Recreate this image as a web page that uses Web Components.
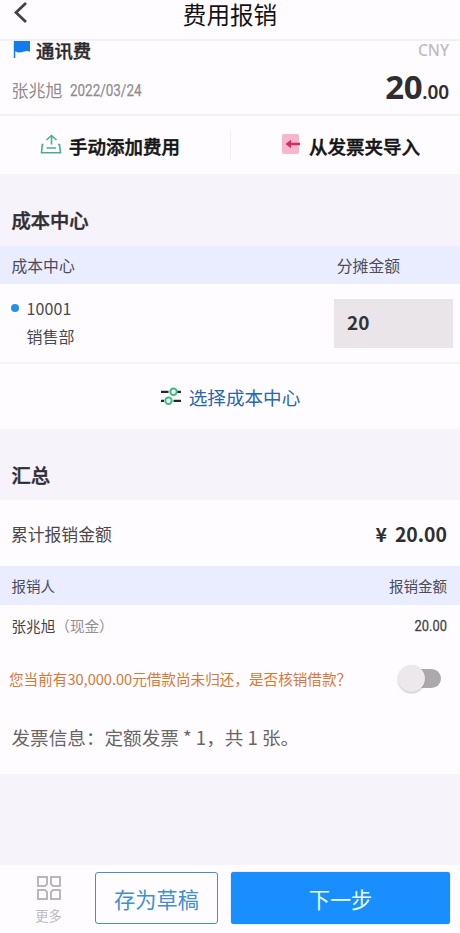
<!DOCTYPE html>
<html lang="zh-CN">
<head>
<meta charset="utf-8">
<meta name="viewport" content="width=device-width, initial-scale=1">
<title>费用报销</title>
<style>
html,body{margin:0;padding:0;background:#f7f3fa}
body{font-family:"Noto Sans CJK SC",sans-serif;color:#39363a;overflow:hidden}
</style>
</head>
<body>
<expense-page></expense-page>
<script>
const define = (name, css, html) => customElements.define(name, class extends HTMLElement {
  constructor() {
    super();
    const t = document.createElement('template');
    t.innerHTML = `<style>*{box-sizing:border-box}:host{box-sizing:border-box;white-space:nowrap}${css}</style>${html}`;
    this.attachShadow({mode: 'open'}).append(t.content.cloneNode(true));
  }
});

define('nav-bar', `
:host{display:grid;grid-template-columns:60px 1fr 60px;height:41px;background:#fefcff;border-bottom:2px solid #f2f0f4;align-items:start;font-family:"Liberation Sans","Noto Sans CJK SC",sans-serif}
svg{display:block;margin:1px 0 0 13px}
h1{margin:0;padding-top:3px;font-size:23.6px;font-weight:400;line-height:27px;color:#141315;text-align:center}`,
`<svg width="16" height="24" viewBox="0 0 16 24" fill="none" stroke="#454247" stroke-width="2.8"><path d="M13 2 3 11.5 13 21"/></svg><h1><slot></slot></h1>`);

define('expense-item', `
:host{display:flex;justify-content:space-between;height:75px;padding:0 11px 0 12px;background:#fefcff;border-bottom:2px solid #f4f1f6}
.l,.r{display:flex;flex-direction:column}
.r{align-items:flex-end}
.name{display:flex;gap:6px;height:19px;font-size:18.4px;line-height:18px;font-weight:500;-webkit-text-stroke:.35px #2b292c;color:#2b292c}
.meta{display:flex;gap:7px;margin:20px 0 0 -.5px;font-size:17px;line-height:20px;color:#8f8c90}
.date{font:400 16px/22px Roboto,sans-serif;transform:scaleX(.84);transform-origin:0 50%;-webkit-text-stroke:.25px #8f8c90}
.cur{font:500 15.6px/19px "Noto Sans",sans-serif;color:#bfbbc1}
.amt{display:flex;align-items:baseline;margin-top:5px;font-family:"Noto Sans",sans-serif;font-weight:700;color:#302d31;line-height:44px;font-size:33px;letter-spacing:-.4px}
.cents{font-size:19px;letter-spacing:-.1px;font-weight:600}`,
`<div class="l"><div class="name"><svg width="18" height="18" viewBox="0 0 18 18"><path d="M2 0H18V10.8C13 8 9 14 3.3 10.3V17H1.8V0Z" fill="#147bee"/></svg><slot name="name"></slot></div>
<div class="meta"><slot name="person"></slot><span class="date"><slot name="date"></slot></span></div></div>
<div class="r"><div class="cur"><slot name="currency"></slot></div><div class="amt"><slot name="whole"></slot><span class="cents"><slot name="cents"></slot></span></div></div>`);

define('action-row', `
:host{display:grid;grid-template-columns:230px 1fr;align-items:center;height:58px;background:#fefcff}
::slotted(:last-child){border-left:1px solid #f1eef3}`, `<slot></slot>`);
define('action-link', `
:host{display:flex;height:27px;align-items:center;gap:7px;padding-left:40px;font-size:18.5px;line-height:27px;font-weight:500;-webkit-text-stroke:.5px #151416;color:#151416}
:host([far]){padding-left:51px}
::slotted([slot=icon]){margin-top:-2px}
span{padding-top:2px}`, `<slot name="icon"></slot><span><slot></slot></span>`);
define('upload-icon', `:host{display:block;width:22px;height:22px}svg{display:block}`,
`<svg width="22" height="22" viewBox="0 0 22 22" fill="none" stroke="#4bad95" stroke-width="1.6"><path d="M3.5 11.5H2.3L1.5 19.8H20.5L19.5 11.5H18M6.5 15H16M11.5 11.5V3M6.5 7 11.5 2.5 16.5 7"/></svg>`);
define('import-icon', `:host{display:block;width:20px;height:23px}svg{display:block}`,
`<svg width="20" height="22" viewBox="0 0 20 22"><rect x="0" y="1" width="17" height="20" rx="2" fill="#f6b6cc"/><path d="M3.5 11 9 6.8V9.8H18V12.2H9V15.2Z" fill="#d52d63"/></svg>`);

define('section-title', `
:host{display:flex;height:72px;align-items:flex-end;padding:0 11.5px 11px;font-size:19.3px;line-height:30px;font-weight:500;-webkit-text-stroke:.45px #302e34;color:#302e34}
:host([compact]){height:71px;padding-bottom:10px}`, `<slot></slot>`);

define('table-head', `
:host{display:flex;justify-content:space-between;align-items:center;height:38px;padding:0 13px 0 11.5px;background:#e9edff;color:#4b4c5a;font-size:var(--s,15.8px)}`, `<slot></slot>`);

define('cost-row', `
:host{display:flex;justify-content:space-between;height:80px;padding:15px 7px 0 11px;background:#fefcff;border-bottom:2px solid #f5f2f7}
.l{display:grid;grid-template-columns:15.5px auto;grid-template-rows:20px 34px;align-content:start;font-size:16px;color:#4c494d}
i{width:8px;height:8px;border-radius:50%;background:#278fe8;margin-top:5px}
.code{line-height:19px;letter-spacing:.1px}
.name{grid-column:2;line-height:34px}
.field{width:119px;height:49px;padding-left:13px;background:#e9e5e9;font-size:19px;line-height:46px;font-weight:700;color:#343135}`,
`<div class="l"><i></i><span class="code"><slot name="code"></slot></span><span class="name"><slot name="name"></slot></span></div><div class="field"><slot name="amount"></slot></div>`);

define('choose-center', `
:host{display:flex;justify-content:center;align-items:center;gap:7px;height:65px;background:#fefcff;font-size:18.6px;color:#2a67ab}
svg{margin-top:-1px}`,
`<svg width="22" height="20" viewBox="0 0 22 20" fill="none" stroke-width="2"><path d="M1 5.8H8.5M17 5.8H21M1 14.8H4M13.5 14.8H21" stroke="#29292b" stroke-width="2.2"/><circle cx="13.5" cy="5.8" r="3.2" stroke="#3cbc7f" stroke-width="2"/><circle cx="8.5" cy="14.8" r="3.2" stroke="#3cbc7f" stroke-width="2"/></svg><span><slot></slot></span>`);

define('total-row', `
:host{display:flex;justify-content:space-between;align-items:center;height:66px;padding:1px 13px 0 11px;background:#fefcff;font-size:16.8px;color:#4b484c}
b{display:flex;gap:8px;font-size:19.4px;font-weight:700;color:#302e31}`,
`<slot></slot><b><slot name="symbol"></slot><slot name="amount"></slot></b>`);

define('person-row', `
:host{display:flex;justify-content:space-between;align-items:center;height:41px;padding:0 13px 0 11.5px;background:#fefcff;font-size:14.6px;color:#454246}
.note{color:#918e92}
.amt{font:400 15.5px/20px Roboto,sans-serif;transform:scaleX(.83);transform-origin:100% 50%;-webkit-text-stroke:.3px #454246}`,
`<span><slot></slot><span class="note"><slot name="note"></slot></span></span><span class="amt"><slot name="amount"></slot></span>`);

define('loan-row', `
:host{display:flex;justify-content:space-between;align-items:center;height:64px;padding:0 18px 0 9px;background:#fefcff;font-size:14.6px;color:#d77836}`,
`<slot></slot><toggle-switch></toggle-switch>`);
define('toggle-switch', `
:host{display:flex;align-items:center;width:44px;height:28px}
.track{display:flex;align-items:center;width:37px;height:19px;margin-left:6px;border-radius:10px;background:#aba9ac}
.knob{flex:none;width:27px;height:27px;margin-left:-6px;border-radius:50%;background:#ece8eb;box-shadow:0 1px 2px #8888}`,
`<div class="track"><div class="knob"></div></div>`);

define('invoice-row', `
:host{display:flex;align-items:center;height:64px;padding:0 12px 12px 11.5px;background:#fefcff;font-size:18.6px;color:#69666a}`, `<slot></slot>`);

define('bottom-bar', `
:host{display:grid;grid-template-columns:95px 123px 232px;height:68px;padding-top:7px;background:#fefcff}
::slotted(:last-child){margin-left:13px}`, `<slot></slot>`);
define('more-button', `
:host{display:flex;flex-direction:column;align-items:center;padding:4px 0 0 2px;font-size:13.2px;line-height:18px;color:#bdb9bf}
svg{display:block;margin-bottom:7px}`,
`<svg width="24" height="24" viewBox="0 0 24 24" fill="none" stroke="#bab7bb" stroke-width="2"><path d="M1 1H10V8L8 10H1ZM14 1H23V10H16L14 8ZM1 14H8L10 16V23H1ZM16 14H23V23H14V16Z"/></svg><span><slot></slot></span>`);
define('form-button', `
:host{display:flex;align-items:center;justify-content:center;height:52px;border:1.5px solid #428fcc;border-radius:3px;background:#fefcff;font-size:21.2px;color:#438fd0}
:host([primary]){border:0;background:#198fff;color:#eaffff;box-shadow:0 0 1px #3488c7}`, `<slot></slot>`);

define('expense-page', `
:host{display:flex;flex-direction:column;width:460px;height:933px;background:#f7f3fa}
bottom-bar{margin-top:auto}`, `
<nav-bar>费用报销</nav-bar>
<expense-item><span slot="name">通讯费</span><span slot="person">张兆旭</span><span slot="date">2022/03/24</span><span slot="currency">CNY</span><span slot="whole">20</span><span slot="cents">.00</span></expense-item>
<action-row><action-link><upload-icon slot="icon"></upload-icon>手动添加费用</action-link><action-link far><import-icon slot="icon"></import-icon>从发票夹导入</action-link></action-row>
<section-title>成本中心</section-title>
<table-head style="padding-right:60px"><span>成本中心</span><span>分摊金额</span></table-head>
<cost-row><span slot="code">10001</span><span slot="name">销售部</span><span slot="amount">20</span></cost-row>
<choose-center>选择成本中心</choose-center>
<section-title compact>汇总</section-title>
<total-row>累计报销金额<span slot="symbol">¥</span><span slot="amount">20.00</span></total-row>
<table-head style="--s:14.5px;height:39px"><span>报销人</span><span>报销金额</span></table-head>
<person-row>张兆旭<span slot="note">（现金）</span><span slot="amount">20.00</span></person-row>
<loan-row>您当前有30,000.00元借款尚未归还，是否核销借款？</loan-row>
<invoice-row>发票信息：定额发票 * 1，共 1 张。</invoice-row>
<bottom-bar><more-button>更多</more-button><form-button>存为草稿</form-button><form-button primary>下一步</form-button></bottom-bar>`);
</script>
</body>
</html>
